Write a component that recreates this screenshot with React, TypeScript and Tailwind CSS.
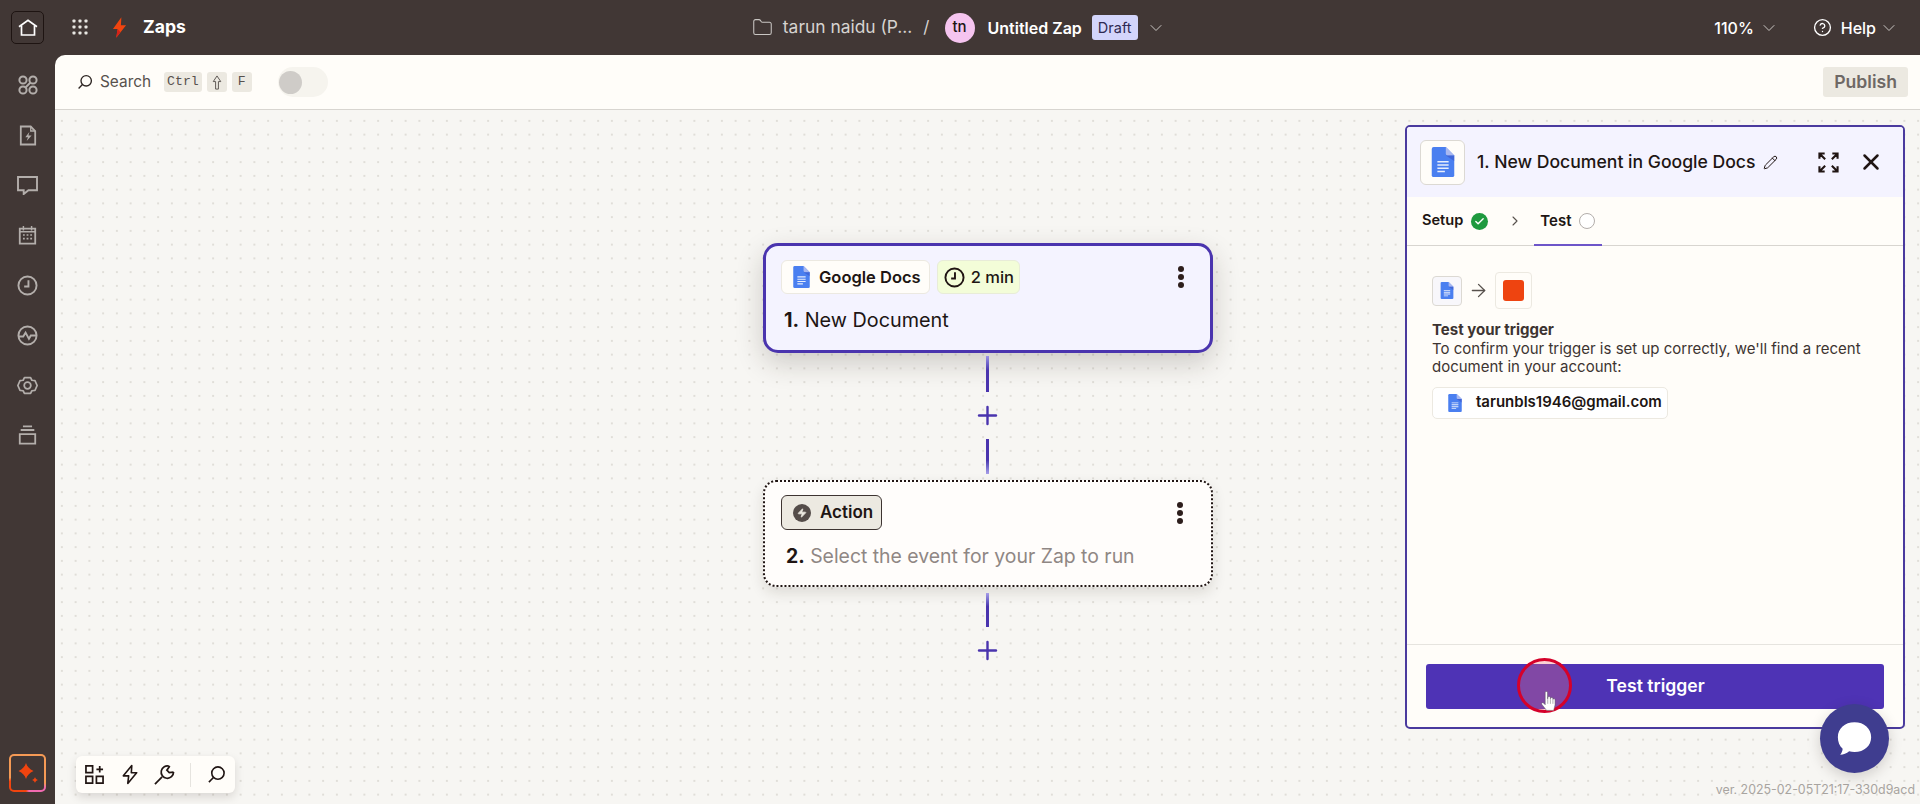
import React from "react";
import {
  ChevronDown,
  ChevronRight,
  CircleHelp,
  Folder,
  Pencil,
  Plus,
  X,
  ArrowRight,
  Check,
  Zap,
} from "lucide-react";

// Google Docs mark
const DocsIcon = ({ className }: { className?: string }) => (
  <svg viewBox="0 0 24 32" className={className}>
    <path d="M2 0h13l9 9v21a2 2 0 0 1-2 2H2a2 2 0 0 1-2-2V2a2 2 0 0 1 2-2z" fill="#4a7ff0" />
    <path d="M15 0l9 9h-7a2 2 0 0 1-2-2z" fill="#a9b8f0" />
    <path d="M15 9l9 6V9z" fill="#3a55c8" opacity="0.6" />
    <path d="M6 15h12v1.6H6zM6 18.4h12V20H6zM6 21.8h12v1.6H6zM6 25.2h8v1.6H6z" fill="#e8eefc" />
  </svg>
);

const ZapLogo = () => (
  <svg viewBox="0 0 16 22" className="w-[15px] h-[21px]">
    <path d="M10 0L1 12.5h5L4.5 22 15 8.5h-5.5z" fill="#f0440f" />
    <path d="M6 12.5L4.5 22 9 16z" fill="#d4211a" />
  </svg>
);

const HomeIcon = () => (
  <svg viewBox="0 0 20 20" className="w-[20px] h-[20px]" fill="none" stroke="#fff" strokeWidth="1.7">
    <path d="M1 8.700L10 2.200l9 6.500" />
    <path d="M3.500 7.500V17h13V7.500" />
  </svg>
);

const GridDots = () => (
  <svg viewBox="0 0 16 16" className="w-[16px] h-[16px]" fill="#e8e6e2">
    {[2, 8, 14].map((y) =>
      [2, 8, 14].map((x) => <rect key={`${x}-${y}`} x={x - 1.5} y={y - 1.5} width="3" height="3" rx="0.8" />)
    )}
  </svg>
);

const SearchGlass = ({ className }: { className?: string }) => (
  <svg viewBox="0 0 20 20" className={className} fill="none" stroke="currentColor" strokeWidth="1.7">
    <circle cx="11.5" cy="8.5" r="6.5" />
    <path d="M6.8 13.2L2 18" />
  </svg>
);

// left rail icons, same grey stroke
const railStroke = { fill: "none", stroke: "#b3aeab", strokeWidth: 2 };

const RailApps = () => (
  <svg viewBox="0 0 20 20" className="w-[20px] h-[20px]" {...railStroke}>
    <circle cx="5" cy="5" r="3.6" />
    <circle cx="15" cy="5" r="3.6" />
    <circle cx="5" cy="15" r="3.6" />
    <circle cx="15" cy="15" r="3.6" />
    <path d="M7.5 12.5l5-5" />
  </svg>
);
const RailZapFile = () => (
  <svg viewBox="0 0 20 22" className="w-[18px] h-[21px]" {...railStroke}>
    <path d="M2 1h11l5 5v15H2z" />
    <path d="M13 1v5h5" strokeWidth="1.4" />
    <path d="M11.5 7L7 13h3l-1.5 4L14 11h-3.5z" fill="#b3aeab" stroke="none" />
  </svg>
);
const RailChat = () => (
  <svg viewBox="0 0 22 20" className="w-[21px] h-[19px]" {...railStroke}>
    <path d="M1 1h20v14H12l-5 4v-4H1z" />
  </svg>
);
const RailCalendar = () => (
  <svg viewBox="0 0 20 22" className="w-[19px] h-[20px]" {...railStroke}>
    <path d="M1.5 4h17v16.5h-17z" />
    <path d="M5.5 1v5M14.5 1v5M1.5 7.5h17" strokeWidth="1.6" />
    <path d="M5 11h2M9 11h2M13 11h2M5 15h2M9 15h2M13 15h2" strokeWidth="1.8" />
  </svg>
);
const RailClock = () => (
  <svg viewBox="0 0 22 22" className="w-[21px] h-[21px]" {...railStroke}>
    <circle cx="11" cy="11" r="9.5" />
    <path d="M12 5.5V12H7.5" />
  </svg>
);
const RailActivity = () => (
  <svg viewBox="0 0 22 22" className="w-[21px] h-[21px]" {...railStroke}>
    <circle cx="11" cy="11" r="9.5" />
    <path d="M2 12h4.5l2.5-4 3.5 6.5 2-3.5h5.5" />
  </svg>
);
const RailGear = () => (
  <svg viewBox="0 0 24 24" className="w-[21px] h-[21px]" {...railStroke}>
    <path d="M8.5 3l7 0 1.5 3 3.5.3L23 12l-2.500 5.700-3.500.3-1.500 3h-7l-1.500-3-3.500-.3L1 12l2.500-5.700 3.500-.3z" strokeLinejoin="round" />
    <circle cx="12" cy="12" r="3.8" />
  </svg>
);
const RailStack = () => (
  <svg viewBox="0 0 20 22" className="w-[19px] h-[20px]" {...railStroke}>
    <path d="M5 1.500h10M2.500 5.500h15" />
    <path d="M1.500 10h17v10.500h-17z" />
  </svg>
);

const Kbd = ({ children, mono = true }: { children: React.ReactNode; mono?: boolean }) => (
  <span
    className={`h-[20px] min-w-[20px] px-[3px] rounded-[3px] bg-[#ece9e1] text-[#57514d] flex items-center justify-center text-[13.200px] ${
      mono ? "font-['Liberation_Mono',monospace]" : ""
    }`}
  >
    {children}
  </span>
);

const Kebab = () => (
  <div className="flex flex-col gap-[2px]">
    <span className="w-[6px] h-[6px] rounded-full bg-[#2d1e1c]" />
    <span className="w-[6px] h-[6px] rounded-full bg-[#2d1e1c]" />
    <span className="w-[6px] h-[6px] rounded-full bg-[#2d1e1c]" />
  </div>
);

const PlusMark = () => <Plus className="w-[29px] h-[29px] text-[#4a34ae]" strokeWidth={2} />;

const TopBar = () => (
  <header className="h-[55px] shrink-0 flex items-center text-white">
    <div className="w-[55px] flex justify-center">
      <div className="w-[33px] h-[33px] rounded-[5px] border border-[#1e1412] flex items-center justify-center">
        <HomeIcon />
      </div>
    </div>
    <div className="ml-[17px] flex items-center">
      <GridDots />
      <div className="ml-[24px]">
        <ZapLogo />
      </div>
      <span className="ml-[16px] text-[17.600px] font-bold">Zaps</span>
    </div>

    <div className="ml-[566px] flex items-center">
      <Folder className="w-[21px] h-[21px] text-[#c9c6c3]" strokeWidth={1.2} />
      <span className="ml-[10px] text-[17.400px] text-[#d6d3d0]">tarun naidu (P...</span>
      <span className="ml-[11px] text-[17px] text-[#d6d3d0]">/</span>
      <span className="ml-[15px] w-[30px] h-[30px] rounded-full bg-[#f5c4ef] text-[#201513] text-[15px] font-medium flex items-center justify-center">
        tn
      </span>
      <span className="ml-[13px] text-[16px] font-semibold">Untitled Zap</span>
      <span className="ml-[10px] h-[25px] px-[6px] rounded-[3px] bg-[#d3d5fb] text-[#2e2a52] text-[14.500px] flex items-center">
        Draft
      </span>
      <ChevronDown className="ml-[8px] w-[20px] h-[20px] text-[#c9c6c3]" strokeWidth={1.2} />
    </div>

    <div className="ml-auto flex items-center pr-[21px]">
      <span className="text-[16px] font-medium">110%</span>
      <ChevronDown className="ml-[5px] w-[20px] h-[20px] text-[#c9c6c3]" strokeWidth={1.2} />
      <CircleHelp className="ml-[34px] w-[19px] h-[19px]" strokeWidth={1.7} />
      <span className="ml-[9px] text-[16px] font-medium">Help</span>
      <ChevronDown className="ml-[3px] w-[20px] h-[20px] text-[#c9c6c3]" strokeWidth={1.2} />
    </div>
  </header>
);

const Rail = () => (
  <aside className="w-[55px] shrink-0 flex flex-col items-center pt-[5px]">
    <div className="flex flex-col items-center w-full">
      <div className="h-[50px] flex items-center justify-center"><RailApps /></div>
      <div className="h-[50px] flex items-center justify-center"><RailZapFile /></div>
      <div className="h-[50px] flex items-center justify-center"><RailChat /></div>
      <div className="h-[50px] flex items-center justify-center"><RailCalendar /></div>
      <div className="h-[50px] flex items-center justify-center"><RailClock /></div>
      <div className="h-[50px] flex items-center justify-center"><RailActivity /></div>
      <div className="h-[50px] flex items-center justify-center"><RailGear /></div>
      <div className="h-[50px] flex items-center justify-center"><RailStack /></div>
    </div>
    <div className="mt-auto mb-[12px] w-[37px] h-[38px] rounded-[5px] p-[2px] bg-[conic-gradient(#f59a55_0deg,#f59a55_120deg,#f06ab0_130deg,#f06ab0_175deg,#f0440f_185deg,#f0440f_245deg,#f59a55_255deg)]">
      <div className="w-full h-full rounded-[3px] bg-[#413735] flex items-center justify-center">
        <svg viewBox="0 0 33 34" className="w-[33px] h-[34px]" fill="#f0440f">
          <path d="M15 7c1 3.500 3.500 6 7.500 8-4 2-6.500 4.500-7.500 8-1-3.500-3.500-6-7.500-8 4-2 6.500-4.500 7.500-8z" />
          <path d="M24 21c.4 1.300 1.200 2.200 3 3-1.800.8-2.600 1.700-3 3-.4-1.300-1.200-2.200-3-3 1.800-.8 2.600-1.700 3-3z" />
        </svg>
      </div>
    </div>
  </aside>
);

const Toolbar = () => (
  <div className="h-[55px] shrink-0 bg-[#fffdf9] border-b border-[#d8d5d0] flex items-center pl-[22px] pr-[12px]">
    <SearchGlass className="w-[16px] h-[16px] text-[#2d2523]" />
    <span className="ml-[7px] text-[15.400px] text-[#57514d]">Search</span>
    <div className="ml-[13px] flex items-center gap-[5px]">
      <Kbd>Ctrl</Kbd>
      <Kbd mono={false}>
        <svg viewBox="0 0 10 16" className="w-[10px] h-[15px]" fill="none" stroke="#57514d" strokeWidth="1">
          <path d="M5 1L1 7h2.500v8h3V7H9z" />
        </svg>
      </Kbd>
      <Kbd>F</Kbd>
    </div>
    <div className="ml-[26px] w-[50px] h-[30px] rounded-full bg-[#f6f4ee] flex items-center pl-[1px]">
      <span className="w-[23px] h-[23px] rounded-full bg-[#cfccc8]" />
    </div>
    <button className="ml-auto h-[30px] px-[11px] rounded-[3px] bg-[#ece9e1] text-[#6e6865] text-[17.600px] font-semibold">
      Publish
    </button>
  </div>
);

const TriggerCard = () => (
  <div className="w-[450px] h-[110px] rounded-[15px] border-[3px] border-[#4a34ae] bg-[#f4f3ff] shadow-[0_10px_28px_rgba(40,30,20,0.2)] pl-[15px] pr-[26px] pt-[14px] box-border">
    <div className="flex items-center">
      <div className="h-[34px] pl-[11px] pr-[8px] rounded-[6px] border border-[#ece9e1] bg-[#fffdf9] flex items-center gap-[9px]">
        <DocsIcon className="w-[17px] h-[22px]" />
        <span className="text-[16.500px] font-semibold text-[#201513]">Google Docs</span>
      </div>
      <div className="ml-[7px] h-[34px] pl-[6px] pr-[5px] rounded-[6px] border border-[#e8ecd8] bg-[#f3fdd8] flex items-center gap-[6px]">
        <svg viewBox="0 0 22 22" className="w-[21px] h-[21px]" fill="none" stroke="#201513" strokeWidth="2">
          <circle cx="11" cy="11" r="9.500" />
          <path d="M11.500 5.500V12H7.500" />
        </svg>
        <span className="text-[16.500px] font-medium text-[#201513]">2 min</span>
      </div>
      <div className="ml-auto"><Kebab /></div>
    </div>
    <div className="mt-[14px] pl-[3px] text-[19.800px] leading-[24px] text-[#201513]">
      <span className="font-bold">1.</span> New Document
    </div>
  </div>
);

const ActionCard = () => (
  <div className="w-[450px] h-[107px] rounded-[13px] border-[2.500px] border-dotted border-[#201513] bg-[#fffdfb] shadow-[0_6px_14px_rgba(40,30,20,0.12)] pl-[16px] pr-[28px] pt-[13px] box-border">
    <div className="flex items-center">
      <div className="h-[35px] pl-[11px] pr-[8px] rounded-[6px] border border-[#3d3431] bg-[#ece9e1] flex items-center gap-[9px]">
        <span className="w-[18px] h-[18px] rounded-full bg-[#544c49] flex items-center justify-center">
          <Zap className="w-[10px] h-[10px] text-[#ece9e1]" fill="#ece9e1" />
        </span>
        <span className="text-[17px] font-semibold text-[#201513]">Action</span>
      </div>
      <div className="ml-auto"><Kebab /></div>
    </div>
    <div className="mt-[14px] pl-[5px] text-[19.400px] leading-[24px] text-[#8f8784]">
      <span className="font-bold text-[#201513]">2.</span> Select the event for your Zap to run
    </div>
  </div>
);

const SidePanel = () => (
  <section className="absolute left-[1350px] top-[15px] w-[500px] h-[604px] rounded-[5px] border-2 border-[#4a3a9e] bg-[#fffdf9] flex flex-col overflow-hidden">
    <div className="h-[70px] shrink-0 bg-[#f4f3ff] flex items-center pl-[13px] pr-[19px]">
      <div className="w-[45px] h-[45px] rounded-[6px] border border-[#dcd9d3] bg-[#fffdf9] flex items-center justify-center">
        <DocsIcon className="w-[24px] h-[30px]" />
      </div>
      <span className="ml-[12px] text-[17.600px] text-[#201513] font-medium">1. New Document in Google Docs</span>
      <Pencil className="ml-[7px] w-[15px] h-[15px] text-[#201513]" strokeWidth={1.6} />
      <svg viewBox="0 0 22 22" className="ml-auto w-[21px] h-[21px]" fill="none" stroke="#201513" strokeWidth="2.200">
        <path d="M1.500 7V1.500H7M1.500 1.500l6 6M20.500 7V1.500H15M20.500 1.500l-6 6M1.500 15v5.500H7M1.500 20.500l6-6M20.500 15v5.500H15M20.500 20.500l-6-6" />
      </svg>
      <X className="ml-[19px] w-[26px] h-[26px] text-[#201513]" strokeWidth={2.300} />
    </div>
    <div className="h-[49px] shrink-0 border-b border-[#d8d5d0] flex items-center pl-[15px]">
      <span className="text-[14.600px] font-semibold text-[#201513]">Setup</span>
      <span className="ml-[8px] w-[17px] h-[17px] rounded-full bg-[#1f9a3f] flex items-center justify-center">
        <Check className="w-[11px] h-[11px] text-white" strokeWidth={3} />
      </span>
      <ChevronRight className="ml-[19px] w-[16px] h-[16px] text-[#57514d]" strokeWidth={1.6} />
      <div className="ml-[11px] relative h-full flex items-center pl-[6px] pr-[7px]">
        <span className="text-[15px] font-semibold text-[#201513]">Test</span>
        <span className="ml-[8px] w-[16px] h-[16px] rounded-full border border-[#b3aeab] bg-white" />
        <span className="absolute left-0 right-0 -bottom-px h-[2px] bg-[#6d55c9]" />
      </div>
    </div>
    <div className="flex-1 px-[25px] pt-[26px]">
      <div className="flex items-center">
        <div className="w-[30px] h-[30px] rounded-[4px] border border-[#dcd9d3] bg-[#f8f7fb] flex items-center justify-center">
          <DocsIcon className="w-[14px] h-[17px]" />
        </div>
        <ArrowRight className="ml-[6px] w-[21px] h-[21px] text-[#57514d]" strokeWidth={1.5} />
        <div className="ml-[6px] w-[37px] h-[37px] rounded-[4px] border border-[#ece9e1] bg-[#fffdf9] flex items-center justify-center">
          <span className="w-[21px] h-[21px] rounded-[3px] bg-[#ee4410]" />
        </div>
      </div>
      <div className="mt-[12px] text-[15px] leading-[18.500px] text-[#3d3431]">
        <div className="font-bold">Test your trigger</div>
        <div>
          To confirm your trigger is set up correctly, we'll find a recent
          <br />
          document in your account:
        </div>
      </div>
      <div className="mt-[10px] w-[236px] h-[32px] rounded-[5px] border border-[#ece9e1] bg-white flex items-center pl-[15px]">
        <DocsIcon className="w-[14px] h-[18px]" />
        <span className="ml-[14px] text-[15px] font-semibold text-[#201513]">tarunbls1946@gmail.com</span>
      </div>
    </div>
    <div className="h-[83px] shrink-0 border-t border-[#e6e4df] px-[19px] pt-[19px]">
      <div className="h-[45px] relative rounded-[3px] bg-[#4e33b5] flex items-center justify-center text-white text-[17.600px] font-semibold pl-[1px]">
        Test trigger
        <span className="absolute left-[91px] top-[-6px] w-[55px] h-[55px] rounded-full border-[3px] border-[#d5012a] bg-[#f1768350]" />
        <svg
          viewBox="0 0 16 22"
          className="absolute left-[115px] top-[26px] w-[15px] h-[22px]"
          fill="#fff"
          stroke="#555"
          strokeWidth="0.500"
        >
          <path d="M4.500 2a1.200 1.200 0 0 1 2.400 0v6.500h.6V7a1.200 1.200 0 0 1 2.300 0v1.500h.5V8a1.200 1.200 0 0 1 2.300 0v1h.3a1.200 1.200 0 0 1 2.100.8V15l-1.500 6H6L.8 14.500c-.6-1 .6-2.300 1.700-1.500l2 2z" />
          <path d="M7.200 9v5M10 9v5M12.700 9v5" fill="none" />
        </svg>
      </div>
    </div>
  </section>
);

const BottomTools = () => (
  <div className="absolute left-[21px] bottom-[11px] h-[37px] rounded-[6px] bg-[#fffdf9] shadow-[0_4px_10px_rgba(40,30,20,0.14)] flex items-center px-[9px] text-[#201513]">
    <svg viewBox="0 0 20 20" className="w-[19px] h-[19px]" fill="none" stroke="currentColor" strokeWidth="1.800">
      <path d="M1 1h7v7H1zM1 12h7v7H1zM12 12h7v7h-7zM15.500 1v7M12 4.500h7" />
    </svg>
    <svg viewBox="0 0 18 22" className="ml-[18px] w-[16px] h-[21px]" fill="none" stroke="currentColor" strokeWidth="1.800">
      <path d="M11 1L1.500 12.500h6L6.500 21 16.500 9H10.500z" strokeLinejoin="round" />
    </svg>
    <svg viewBox="0 0 22 22" className="ml-[16px] w-[21px] h-[21px]" fill="none" stroke="currentColor" strokeWidth="1.800">
      <path d="M1 21l7.500-7.500" />
      <path d="M20.500 8.500a6.500 6.500 0 1 1-4.500-6.200M16.500 2l-3 4.500 2.500 2.500 4.500-.5" />
    </svg>
    <span className="ml-[15px] w-px h-[24px] bg-[#e6e4df]" />
    <SearchGlass className="ml-[16px] w-[19px] h-[19px]" />
  </div>
);

const App = () => {
  return (
    <div className="w-[1920px] h-[804px] bg-[#413735] flex flex-col overflow-hidden font-['Inter',sans-serif]">
      <TopBar />
      <div className="flex-1 flex min-h-0">
        <Rail />
        <main className="flex-1 flex flex-col rounded-tl-[10px] overflow-hidden relative">
          <Toolbar />
          <div className="flex-1 relative bg-[#f7f6f3] bg-[radial-gradient(circle,#e0ded8_0.7px,transparent_1px)] bg-[size:13.750px_13.750px] bg-[position:0px_4px]">
            <div className="pl-[708px] pt-[133px] flex flex-col w-[1158px]">
              <TriggerCard />
              <div className="w-[449px] flex flex-col items-center">
                <div className="mt-[3px] w-[3px] h-[36px] bg-gradient-to-b from-[#9c92e6] to-[#4a34ae] to-40%" />
                <div className="h-[47px] flex items-center"><PlusMark /></div>
                <div className="w-[3px] h-[35px] bg-gradient-to-t from-[#a79ee8] to-[#4a34ae] to-40%" />
              </div>
              <div className="mt-[6px]"><ActionCard /></div>
              <div className="w-[449px] flex flex-col items-center">
                <div className="mt-[6px] w-[3px] h-[34px] bg-gradient-to-b from-[#a79ee8] to-[#4a34ae] to-40%" />
                <div className="h-[47px] flex items-center"><PlusMark /></div>
              </div>
            </div>
            <SidePanel />
            <BottomTools />
            <span className="absolute right-[5px] bottom-[4px] text-[12.400px] text-[#a8a4a0]">
              ver. 2025-02-05T21:17-330d9acd
            </span>
          </div>
          <div className="absolute left-[1765px] top-[649px] w-[69px] h-[69px] rounded-full bg-[#3f3d8f] shadow-[0_4px_14px_rgba(40,30,20,0.18)] flex items-center justify-center">
            <svg viewBox="0 0 40 38" className="w-[37px] h-[36px]" fill="#fff">
              <path d="M20 1c10.500 0 18 6.800 18 16s-7.500 16-18 16c-2 0-4-.3-5.800-.8C11.500 34.500 8 36 4.500 36c1.500-1.800 2.500-4 2.700-6.500C3.800 26.500 2 22 2 17 2 7.800 9.500 1 20 1z" />
            </svg>
          </div>
        </main>
      </div>
    </div>
  );
};

export default App;
